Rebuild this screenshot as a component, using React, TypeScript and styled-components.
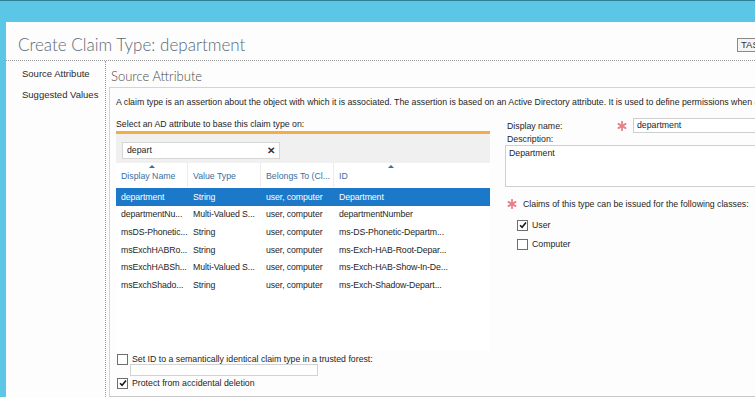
import React from "react";
import styled, { createGlobalStyle } from "styled-components";

const GlobalStyle = createGlobalStyle`
  html, body {
    margin: 0;
    padding: 0;
    background: #ffffff;
  }
  body {
    font-family: "Liberation Sans", Arial, sans-serif;
    font-size: 8.75px;
    color: #1e1e1e;
  }
`;

const Frame = styled.div`
  width: 755px;
  height: 397px;
  box-sizing: border-box;
  overflow: hidden;
  background: #5bc6e6;
  border-top: 1px solid #2d7f98;
  padding: 21px 0 0 6px;
  display: flex;
`;

const Window = styled.div`
  flex: 1;
  background: #fdfdfd;
  display: flex;
  flex-direction: column;
  min-width: 0;
`;

const Header = styled.div`
  height: 39px;
  box-sizing: border-box;
  border-bottom: 1px dotted #9a9a9a;
  display: flex;
  align-items: center;
  justify-content: space-between;
  padding: 0 0 0 12px;
`;

const Title = styled.h1`
  margin: 0;
  font-family: Lato, "Open Sans", sans-serif;
  font-weight: 300;
  font-size: 17px;
  color: #5a6a76;
  padding-top: 6px;
`;

const TaskButton = styled.div`
  width: 18px;
  height: 14px;
  box-sizing: border-box;
  border: 1px solid #8a8a8a;
  border-right: none;
  background: #f4f4f4;
  font-size: 9.5px;
  line-height: 12px;
  padding-left: 3px;
  color: #333;
  margin-top: 7px;
  overflow: hidden;
  white-space: nowrap;
`;

const Body = styled.div`
  flex: 1;
  display: flex;
  min-height: 0;
`;

const Nav = styled.nav`
  width: 100px;
  flex-shrink: 0;
  border-right: 1px dotted #9a9a9a;
  display: flex;
  flex-direction: column;
  gap: 7px;
  padding: 6px 0 0 16px;
  box-sizing: border-box;
`;

const NavItem = styled.div`
  font-size: 9.5px;
  line-height: 14px;
  color: #2a2a2a;
  white-space: nowrap;
`;

const Main = styled.div`
  flex: 1;
  display: flex;
  flex-direction: column;
  padding-left: 3px;
  min-width: 0;
`;

const SectionTitle = styled.h2`
  margin: 0;
  height: 26px;
  font-family: Lato, "Open Sans", sans-serif;
  font-weight: 300;
  font-size: 13px;
  line-height: 30px;
  color: #4a4a4a;
  padding-left: 2px;
`;

const Panel = styled.div`
  flex: 1;
  border-top: 1px solid #d4d4d4;
  border-left: 1px solid #d4d4d4;
  border-bottom: 1px solid #c8c8c8;
  padding: 7px 0 0 6px;
  display: flex;
  flex-direction: column;
  min-width: 0;
`;

const Intro = styled.p`
  margin: 0;
  line-height: 14px;
  white-space: nowrap;
  color: #1e1e1e;
`;

const Columns = styled.div`
  flex: 1;
  display: flex;
  gap: 15px;
  margin-top: 8px;
`;

const LeftCol = styled.div`
  width: 374px;
  flex-shrink: 0;
  display: flex;
  flex-direction: column;
`;

const PickLabel = styled.div`
  line-height: 14px;
  border-bottom: 3px solid #f2ae45;
`;

const SearchBand = styled.div`
  height: 29px;
  background: #f0f0f0;
  display: flex;
  align-items: center;
  padding-left: 6px;
`;

const SearchBox = styled.div`
  width: 158px;
  height: 17px;
  box-sizing: border-box;
  border: 1px solid #d6d6d6;
  background: #fff;
  display: flex;
  align-items: center;
  justify-content: space-between;
  padding: 0 4px 0 4px;
  margin-top: 3px;
`;

const ClearMark = styled.span`
  font-size: 10px;
  font-weight: bold;
  color: #333;
`;

const List = styled.div`
  height: 188px;
  background: #fff;
  display: flex;
  flex-direction: column;
`;

const HeaderRow = styled.div`
  height: 24px;
  display: grid;
  grid-template-columns: 72px 73px 73px 1fr;
  margin-bottom: 1px;
`;

const HeadCell = styled.div<{ $divider?: boolean }>`
  position: relative;
  padding: 6px 0 0 5px;
  line-height: 14px;
  color: #3d6e9c;
  border-right: 1px solid ${(p) => (p.$divider ? "#ececec" : "transparent")};
  white-space: nowrap;
  overflow: hidden;
`;

const SortArrow = styled.span<{ $x: number }>`
  position: absolute;
  top: 2px;
  left: ${(p) => p.$x}px;
  width: 0;
  height: 0;
  border-left: 3px solid transparent;
  border-right: 3px solid transparent;
  border-bottom: 3px solid #3d6e9c;
`;

const Row = styled.div<{ $selected?: boolean }>`
  height: 17.6px;
  display: grid;
  grid-template-columns: 72px 73px 73px 1fr;
  align-items: center;
  background: ${(p) => (p.$selected ? "#1c78c8" : "transparent")};
  color: ${(p) => (p.$selected ? "#ffffff" : "#1e1e1e")};
`;

const Cell = styled.div`
  padding-left: 5px;
  white-space: nowrap;
  overflow: visible;
  letter-spacing: -0.1px;
`;

const CheckRow = styled.label`
  display: flex;
  align-items: center;
  gap: 4px;
  height: 10px;
  line-height: 10px;
  white-space: nowrap;
`;

const Box = styled.span`
  width: 9px;
  height: 9px;
  border: 1px solid #6e6e6e;
  background: #fff;
  display: inline-flex;
  align-items: center;
  justify-content: center;
  flex-shrink: 0;
`;

const ForestInput = styled.div`
  width: 188px;
  height: 12px;
  box-sizing: border-box;
  border: 1px solid #d2d2d2;
  background: #fff;
  margin: 0 0 2px 13px;
`;

const BottomOptions = styled.div`
  display: flex;
  flex-direction: column;
  margin-top: 3px;
  padding-left: 1px;
`;

const RightCol = styled.div`
  flex: 1;
  display: flex;
  flex-direction: column;
  min-width: 0;
  padding-top: 1px;
`;

const FieldRow = styled.div`
  display: flex;
  align-items: center;
  height: 15px;
`;

const FieldLabel = styled.span`
  width: 110px;
  padding-left: 2px;
  flex-shrink: 0;
`;

const RequiredMark = styled.span`
  width: 16px;
  height: 10px;
  display: inline-flex;
  align-items: center;
  flex-shrink: 0;
`;

const TextInput = styled.div`
  flex: 1;
  height: 15px;
  box-sizing: border-box;
  border: 1px solid #cfcfcf;
  border-right: none;
  background: #fff;
  padding-left: 3px;
  line-height: 13px;
`;

const DescLabel = styled.div`
  line-height: 12px;
  padding-left: 2px;
`;

const DescBox = styled.div`
  height: 42px;
  box-sizing: border-box;
  border: 1px solid #cfcfcf;
  border-right: none;
  background: #fff;
  padding: 1px 0 0 3px;
  line-height: 12px;
`;

const ClaimsRow = styled.div`
  display: flex;
  align-items: center;
  margin-top: 10px;
  line-height: 14px;
  padding-left: 2px;
  white-space: nowrap;
`;

const ClassList = styled.div`
  display: flex;
  flex-direction: column;
  gap: 9px;
  margin-top: 9px;
  padding-left: 12px;
`;

function Required() {
  return (
    <RequiredMark>
      <svg width="10" height="10" viewBox="0 0 10 10">
        <g stroke="#e8808c" strokeWidth="1.8" strokeLinecap="round">
          <line x1="5" y1="0.8" x2="5" y2="9.2" />
          <line x1="1.4" y1="2.9" x2="8.6" y2="7.1" />
          <line x1="1.4" y1="7.1" x2="8.6" y2="2.9" />
        </g>
      </svg>
    </RequiredMark>
  );
}

function Check({ checked }: { checked?: boolean }) {
  return (
    <Box>
      {checked && (
        <svg width="8" height="8" viewBox="0 0 8 8">
          <path d="M1 4.2 L3.1 6.3 L7 1.6" fill="none" stroke="#1a1a1a" strokeWidth="1.6" />
        </svg>
      )}
    </Box>
  );
}

const rows = [
  ["department", "String", "user, computer", "Department"],
  ["departmentNu...", "Multi-Valued S...", "user, computer", "departmentNumber"],
  ["msDS-Phonetic...", "String", "user, computer", "ms-DS-Phonetic-Departm..."],
  ["msExchHABRo...", "String", "user, computer", "ms-Exch-HAB-Root-Depar..."],
  ["msExchHABSh...", "Multi-Valued S...", "user, computer", "ms-Exch-HAB-Show-In-De..."],
  ["msExchShado...", "String", "user, computer", "ms-Exch-Shadow-Depart..."],
];

export default function App() {
  return (
    <>
      <GlobalStyle />
      <Frame>
        <Window>
          <Header>
            <Title>Create Claim Type: department</Title>
            <TaskButton>TASKS</TaskButton>
          </Header>
          <Body>
            <Nav>
              <NavItem>Source Attribute</NavItem>
              <NavItem>Suggested Values</NavItem>
            </Nav>
            <Main>
              <SectionTitle>Source Attribute</SectionTitle>
              <Panel>
                <Intro>
                  A claim type is an assertion about the object with which it is associated. The assertion is based on an
                  Active Directory attribute. It is used to define permissions when accessing resources.
                </Intro>
                <Columns>
                  <LeftCol>
                    <PickLabel>Select an AD attribute to base this claim type on:</PickLabel>
                    <SearchBand>
                      <SearchBox>
                        <span>depart</span>
                        <ClearMark>✕</ClearMark>
                      </SearchBox>
                    </SearchBand>
                    <List>
                      <HeaderRow>
                        <HeadCell $divider>
                          Display Name
                          <SortArrow $x={33} />
                        </HeadCell>
                        <HeadCell $divider>Value Type</HeadCell>
                        <HeadCell $divider>Belongs To (Cl...</HeadCell>
                        <HeadCell>
                          ID
                          <SortArrow $x={54} />
                        </HeadCell>
                      </HeaderRow>
                      {rows.map((r, i) => (
                        <Row key={r[0]} $selected={i === 0}>
                          {r.map((c) => (
                            <Cell key={c}>{c}</Cell>
                          ))}
                        </Row>
                      ))}
                    </List>
                    <BottomOptions>
                      <CheckRow>
                        <Check />
                        Set ID to a semantically identical claim type in a trusted forest:
                      </CheckRow>
                      <ForestInput />
                      <CheckRow>
                        <Check checked />
                        Protect from accidental deletion
                      </CheckRow>
                    </BottomOptions>
                  </LeftCol>
                  <RightCol>
                    <FieldRow>
                      <FieldLabel>Display name:</FieldLabel>
                      <Required />
                      <TextInput>department</TextInput>
                    </FieldRow>
                    <DescLabel>Description:</DescLabel>
                    <DescBox>Department</DescBox>
                    <ClaimsRow>
                      <Required />
                      Claims of this type can be issued for the following classes:
                    </ClaimsRow>
                    <ClassList>
                      <CheckRow>
                        <Check checked />
                        User
                      </CheckRow>
                      <CheckRow>
                        <Check />
                        Computer
                      </CheckRow>
                    </ClassList>
                  </RightCol>
                </Columns>
              </Panel>
            </Main>
          </Body>
        </Window>
      </Frame>
    </>
  );
}
